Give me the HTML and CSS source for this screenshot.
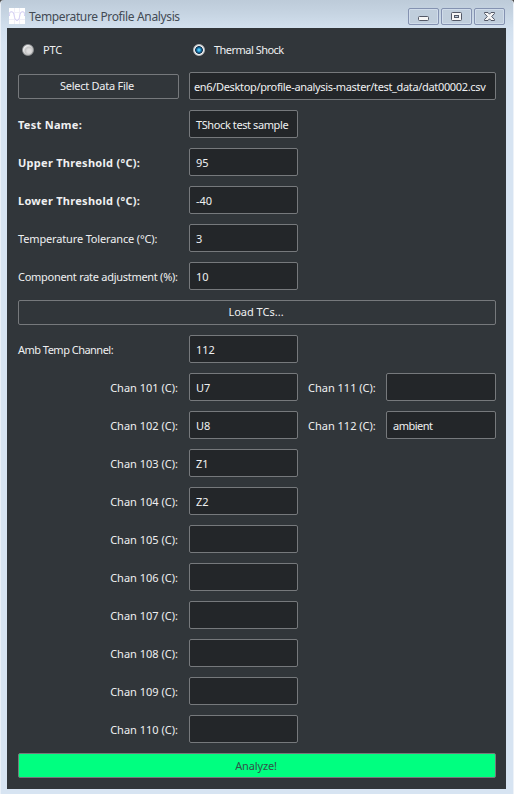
FILE: index.html
```html
<!DOCTYPE html>
<html lang="en">
<head>
<meta charset="utf-8">
<title>Temperature Profile Analysis</title>
<link rel="stylesheet" href="styles.css">
</head>
<body>
<div class="window">
  <header class="titlebar">
    <svg class="app-icon" viewBox="0 0 16 16"><path d="M0 0H16V16H0Z" fill="#fff"/><path d="M0 4.5H16M0 11.500H16M5.500 0V16M10.500 0V16" stroke="#f0eff8" stroke-width="1"/><path d="M.5 8C.5 4.500 1 3.500 2.500 3.500C6 3.500 4.500 12.500 8 12.500S10 3.500 13.500 3.500C15 3.500 15.500 4.500 15.500 8" fill="none" stroke="#d5cff5"/></svg>
    <h1 class="title">Temperature Profile Analysis</h1>
    <div class="controls">
      <div class="control"><svg viewBox="0 0 29 15"><rect x="9.500" y="7.500" width="10" height="4" rx="1" fill="#f6f6f6" stroke="#535866"/></svg></div>
      <div class="control"><svg viewBox="0 0 29 15"><rect x="9.500" y="3.500" width="10" height="8" rx="1" fill="#f6f6f6" stroke="#535866"/><rect x="12.500" y="6.500" width="4" height="2" fill="#b9cad9" stroke="#535866"/></svg></div>
      <div class="control"><svg viewBox="0 0 29 15"><path d="M9.500 3.500H13L14.500 5.200L16 3.500H19.500V4.500L16.700 7.500L19.500 10.500V11.500H16L14.500 9.800L13 11.500H9.500V10.500L12.300 7.500L9.500 4.500Z" fill="#f6f6f6" stroke="#535866"/></svg></div>
    </div>
  </header>
  <main class="form">
    <label class="radio"><span class="dot"></span><span class="text ptc">PTC</span></label>
    <label class="radio shock"><span class="dot checked"></span><span class="text tightest">Thermal Shock</span></label>

    <button class="button select"><span>Select Data File</span></button>
    <div class="field path"><span>en6/Desktop/profile-analysis-master/test_data/dat00002.csv</span></div>

    <div class="label bold">Test Name:</div><div class="field tighter">TShock test sample</div>
    <div class="label bold">Upper Threshold (°C):</div><div class="field">95</div>
    <div class="label bold">Lower Threshold (°C):</div><div class="field">-40</div>
    <div class="label snug">Temperature Tolerance (°C):</div><div class="field">3</div>
    <div class="label tight">Component rate adjustment (%):</div><div class="field">10</div>

    <button class="button wide load"><span>Load TCs...</span></button>

    <div class="label tightest">Amb Temp Channel:</div><div class="field">112</div>
    <div class="label chan">Chan 101 (C):</div><div class="field">U7</div>
    <div class="label second">Chan 111 (C):</div><div class="field"></div>
    <div class="label chan">Chan 102 (C):</div><div class="field">U8</div>
    <div class="label second">Chan 112 (C):</div><div class="field tightest">ambient</div>
    <div class="label chan">Chan 103 (C):</div><div class="field">Z1</div>
    <div class="label chan">Chan 104 (C):</div><div class="field">Z2</div>
    <div class="label chan">Chan 105 (C):</div><div class="field"></div>
    <div class="label chan">Chan 106 (C):</div><div class="field"></div>
    <div class="label chan">Chan 107 (C):</div><div class="field"></div>
    <div class="label chan">Chan 108 (C):</div><div class="field"></div>
    <div class="label chan">Chan 109 (C):</div><div class="field"></div>
    <div class="label chan">Chan 110 (C):</div><div class="field"></div>

    <button class="button wide analyze snug"><span>Analyze!</span></button>
  </main>
</div>
</body>
</html>
```
FILE: styles.css
```css
* { box-sizing: border-box; }
body { margin: 0; background: #484848; }
.window {
  width: 514px; height: 794px; padding: 0 7px 0 6px;
  background: linear-gradient(#bdcbd9, #c5d3e1 12px, #d2e0ee 28px, #d7e4f2 45px);
  border-left: 1px solid #e9f0f8; border-right: 1px solid #edf2f8;
  border-radius: 4px 4px 0 0;
}
.titlebar { height: 28px; display: flex; align-items: flex-start; padding: 8px 1px 0 2px; }
.app-icon { width: 16px; height: 16px; flex: none; }
.title { margin: 0 0 0 4px; font: 400 12px/17px "Noto Sans", sans-serif; letter-spacing: -0.36px; color: #434b55; white-space: nowrap; }
.controls { margin-left: auto; display: flex; gap: 2px; }
.control { width: 31px; height: 17px; border: 1px solid #8492b1; border-radius: 2px; background: #c0cedc; box-shadow: inset 0 0 0 1px #d0dcea; }
.control svg { display: block; width: 29px; height: 15px; }
.form {
  height: 761px; padding: 10px 10px 10px 11px; background: #31363a;
  display: grid; grid-template-columns: 161px 109px 68px 110px; grid-template-rows: 24px; grid-auto-rows: auto;
  gap: 10px; align-content: start; align-items: center;
  color: #eff0f1; font: 11px/15px "Noto Sans", sans-serif;
}
.radio { display: flex; align-items: center; grid-column: 1; padding-left: 4px; }
.shock { grid-column: 2 / -1; }
.radio .text { margin: -2px 0 0 9px; }
.ptc { letter-spacing: -0.2px; }
.dot { width: 12px; height: 12px; border-radius: 50%; border: 1px solid #8d9092; background: radial-gradient(circle at 60% 60%, #ddd 0 20%, #c4c4c4 45%, #f4f4f4 70%); }
.dot.checked { background: radial-gradient(circle, #54c4f1 0 1px, #167bb2 2px, #12334f 3.500px, #f4f4f4 4.200px); border-color: #b7b9ba; }
.label { grid-column: 1; white-space: nowrap; }
.bold { font-weight: 700; letter-spacing: 0.28px; }
.chan { text-align: right; padding-right: 1px; }
.second { grid-column: 3; text-align: right; padding-right: 2px; }
.field { height: 28px; border: 1px solid #76797c; border-radius: 2px; background: #232629; padding: 6px 0 0 6px; line-height: 15px; white-space: nowrap; overflow: hidden; }
.path { grid-column: 2 / -1; padding: 6px 0 0 4px; letter-spacing: -0.34px; }
.button { height: 25px; border: 1px solid #76797c; border-radius: 2px; background: #31363a; color: #eff0f1; font: inherit; padding: 0 0 2px; }
.select { letter-spacing: -0.26px; padding-right: 3px; }
.wide { grid-column: 1 / -1; }
.load { padding-right: 2px; }
.analyze { background: #00ff80; color: #31534a; padding: 0 2px 1px 0; }
.snug { letter-spacing: -0.15px; }
.tight { letter-spacing: -0.28px; }
.tighter { letter-spacing: -0.4px; }
.tightest { letter-spacing: -0.52px; }
```
